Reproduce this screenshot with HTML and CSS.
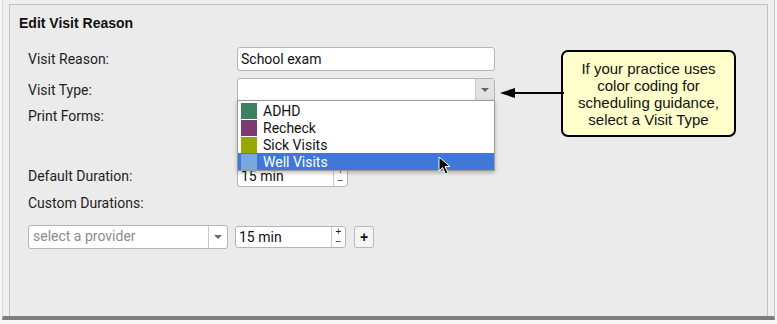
FILE: index.html
```html
<!DOCTYPE html>
<html lang="en">
<head>
    <meta charset="UTF-8">
    <title>Edit Visit Reason</title>
    <link rel="stylesheet" href="styles.css">
</head>
<body>
    <div class="window">
        <div class="panel">
            <h1>Edit Visit Reason</h1>

            <div class="form">
                <div class="row row-reason">
                    <label>Visit Reason:</label>
                    <div class="field text-field">School exam</div>
                </div>

                <div class="row row-type">
                    <label>Visit Type:</label>
                    <div class="select type-select">
                        <span class="select-value"></span>
                        <span class="select-arrow"></span>

                        <!-- open dropdown list -->
                        <ul class="dropdown">
                            <li><span class="swatch" style="background:#3e8160"></span>ADHD</li>
                            <li><span class="swatch" style="background:#7c3a73"></span>Recheck</li>
                            <li><span class="swatch" style="background:#97a800"></span>Sick Visits</li>
                            <li class="active"><span class="swatch" style="background:#7aa5dd"></span>Well Visits</li>
                        </ul>
                    </div>
                </div>

                <div class="row row-forms">
                    <label>Print Forms:</label>
                </div>

                <div class="row row-duration">
                    <label>Default Duration:</label>
                    <div class="spinner">
                        <span class="spin-value">15 min</span>
                        <span class="spin-buttons"><i>+</i><i>&minus;</i></span>
                    </div>
                </div>

                <div class="row row-custom-label">
                    <label>Custom Durations:</label>
                </div>

                <div class="custom-row">
                    <div class="select provider-select">
                        <span class="select-value placeholder">select a provider</span>
                        <span class="select-arrow"></span>
                    </div>
                    <div class="spinner">
                        <span class="spin-value">15 min</span>
                        <span class="spin-buttons"><i>+</i><i>&minus;</i></span>
                    </div>
                    <button class="add-btn">+</button>
                </div>
            </div>
        </div>

        <!-- annotation -->
        <div class="callout">If your practice uses color coding for scheduling guidance, select a Visit Type</div>
        <svg class="pointer" width="64" height="12" viewBox="0 0 64 12">
            <line x1="12" y1="6" x2="64" y2="6" stroke="#000" stroke-width="2"/>
            <polygon points="0,6 15,1 15,11" fill="#000"/>
        </svg>

        <!-- mouse cursor -->
        <svg class="cursor" width="14" height="20" viewBox="0 0 14 20">
            <path d="M1 1 L1 15 L4.5 11.5 L7.5 18 L10 17 L7 10.5 L12 10.5 Z" fill="#000" stroke="#fff" stroke-width="1"/>
        </svg>
    </div>
</body>
</html>
```

FILE: styles.css
```css
* {
    margin: 0;
    padding: 0;
    box-sizing: border-box;
}

body {
    width: 777px;
    height: 324px;
    background: #f6f6f6;
    font-family: Roboto, "Liberation Sans", sans-serif;
    color: #222;
    overflow: hidden;
}

/* outer window frame */
.window {
    position: relative;
    margin: 0 2px;
    height: 320px;
    padding: 4px 6px 0 6px;
    background: #efefef;
    border-left: 1px solid #d8d8d8;
    border-right: 1px solid #c8c8c8;
    border-bottom: 4px solid #7d7d7d;
}

.panel {
    height: 312px;
    background: #ebebeb;
    border: 1px solid #c2c2c2;
    border-bottom: none;
    padding: 10px 0 0 9px;
}

h1 {
    font-family: "Liberation Sans", Arial, sans-serif;
    font-size: 14px;
    font-weight: bold;
    color: #111;
    line-height: 17px;
}

.form {
    padding: 15px 0 0 9px;
}

.row {
    display: flex;
    align-items: center;
    font-size: 14px;
    color: #1e1e1e;
}

.row label {
    width: 209px;
}

.row-reason { height: 24px; }
.row-type { height: 24px; margin-top: 7px; }
.row-forms { height: 18px; margin-top: 5px; }
.row-duration { height: 22px; margin-top: 40px; }
.row-custom-label { height: 18px; margin-top: 7px; }

.field {
    width: 258px;
    height: 24px;
    background: #fff;
    border: 1px solid #b5b5b5;
    border-radius: 3px;
    padding: 0 3px;
    font-size: 14px;
    line-height: 22px;
    color: #111;
}

/* selects */
.select {
    position: relative;
    display: flex;
    background: #fff;
    border: 1px solid #b5b5b5;
    border-radius: 3px;
}

.select-value {
    flex: 1;
    padding: 0 4px;
    font-size: 14px;
    line-height: 21px;
}

.select-value.placeholder {
    color: #8c8c8c;
}

.select-arrow {
    width: 19px;
    border-left: 1px solid #c8c8c8;
    position: relative;
}

.select-arrow::after {
    content: "";
    position: absolute;
    left: 5px;
    top: 9px;
    border-left: 4px solid transparent;
    border-right: 4px solid transparent;
    border-top: 4px solid #666;
}

.type-select {
    width: 258px;
    height: 24px;
    border-radius: 3px 3px 0 0;
}

.type-select .select-arrow {
    background: #e2e2e2;
}

.provider-select {
    width: 200px;
    height: 24px;
}

/* open dropdown list */
.dropdown {
    position: absolute;
    left: -1px;
    top: 21px;
    width: 258px;
    list-style: none;
    background: #fff;
    border: 1px solid #9a9a9a;
    padding: 1px 0 0 0;
    box-shadow: 0 2px 4px rgba(0, 0, 0, 0.25);
    z-index: 2;
}

.dropdown li {
    display: flex;
    align-items: center;
    height: 17px;
    font-size: 14px;
    color: #111;
}

.dropdown li.active {
    background: #3f78d9;
    color: #fff;
}

.swatch {
    width: 16px;
    height: 16px;
    margin: 0 6px 0 3px;
}

/* spinners */
.spinner {
    display: flex;
    width: 111px;
    height: 22px;
    background: #fff;
    border: 1px solid #b5b5b5;
    border-radius: 3px;
}

.spin-value {
    flex: 1;
    padding: 0 3px;
    font-size: 14px;
    line-height: 20px;
    color: #111;
}

.spin-buttons {
    display: flex;
    flex-direction: column;
    width: 14px;
    border-left: 1px solid #c8c8c8;
}

.spin-buttons i {
    flex: 1;
    font-style: normal;
    font-family: "Liberation Sans", Arial, sans-serif;
    font-size: 10px;
    line-height: 10px;
    text-align: center;
    color: #222;
}

.custom-row {
    display: flex;
    align-items: center;
    gap: 7px;
    margin-top: 13px;
}

.custom-row .spinner {
    height: 22px;
}

.add-btn {
    width: 20px;
    height: 22px;
    margin-left: 1px;
    background: #f4f4f4;
    border: 1px solid #b8b8b8;
    border-radius: 3px;
    font-family: "Liberation Sans", Arial, sans-serif;
    font-size: 14px;
    font-weight: bold;
    line-height: 18px;
    color: #111;
}

/* annotation callout */
.callout {
    position: absolute;
    left: 558px;
    top: 50px;
    width: 175px;
    height: 87px;
    padding: 0 10px;
    display: flex;
    align-items: center;
    background: #ffffcc;
    border: 2px solid #000;
    border-radius: 7px;
    font-family: "Liberation Sans", Arial, sans-serif;
    font-size: 15px;
    line-height: 17px;
    text-align: center;
    color: #111;
}

.pointer {
    position: absolute;
    left: 497px;
    top: 87px;
}

.cursor {
    position: absolute;
    left: 435px;
    top: 156px;
    z-index: 3;
}
```
